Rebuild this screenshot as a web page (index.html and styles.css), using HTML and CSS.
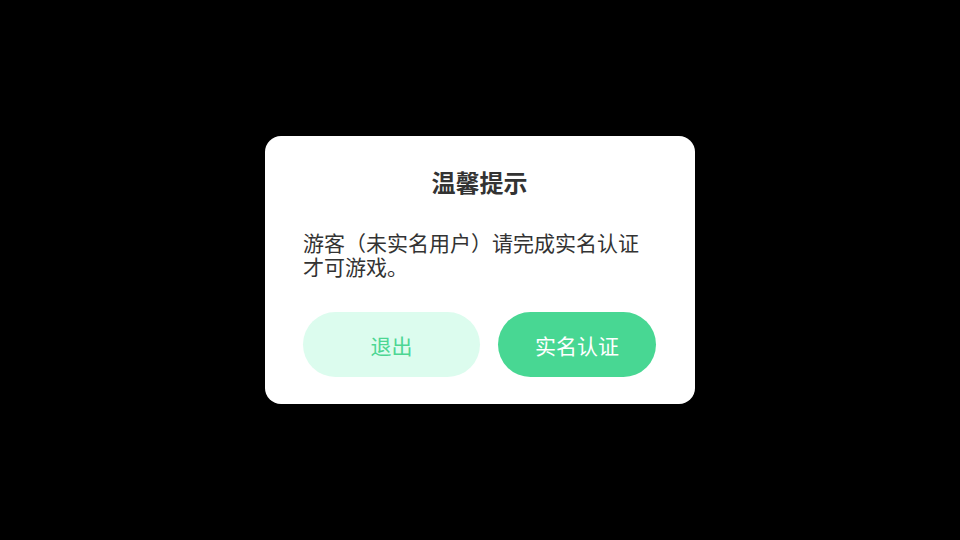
FILE: index.html
```html
<!DOCTYPE html>
<html lang="zh-CN">
<head>
<meta charset="utf-8">
<link rel="stylesheet" href="styles.css">
</head>
<body>
<div class="screen">
  <div class="dialog">
    <div class="title">温馨提示</div>
    <div class="message">游客（未实名用户）请完成实名认证才可游戏。</div>
    <div class="actions">
      <div class="btn btn-exit">退出</div>
      <div class="btn btn-verify">实名认证</div>
    </div>
  </div>
</div>
</body>
</html>
```
FILE: styles.css
```css
html, body {
  margin: 0;
  padding: 0;
  background: #000;
}
.screen {
  width: 960px;
  height: 540px;
  display: flex;
  align-items: center;
  justify-content: center;
  font-family: "Noto Sans CJK SC", "Noto Sans", sans-serif;
}
.dialog {
  width: 430px;
  box-sizing: border-box;
  background: #fff;
  border-radius: 16px;
  padding: 31px 39px 27px 38px;
}
.title {
  text-align: center;
  font-size: 24px;
  font-weight: 700;
  line-height: 29px;
  color: #333;
}
.message {
  margin-top: 34px;
  font-size: 21px;
  line-height: 24px;
  color: #333;
}
.actions {
  margin-top: 34px;
  display: flex;
  gap: 18px;
}
.btn {
  height: 65px;
  border-radius: 33px;
  display: flex;
  align-items: center;
  justify-content: center;
  font-size: 21px;
}
.btn-exit {
  width: 177px;
  background: #dcfcee;
  color: #4cd693;
}
.btn-verify {
  flex: 1;
  background: #48d793;
  color: #fff;
}
```
